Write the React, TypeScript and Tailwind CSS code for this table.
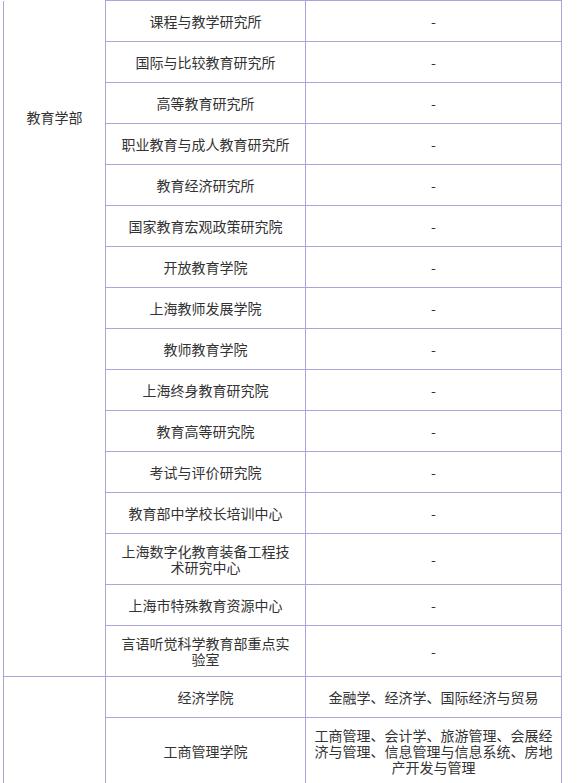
import React from 'react';

type Row = { name: string; majors?: string };

const eduRows: Row[] = [
  { name: '课程与教学研究所' },
  { name: '国际与比较教育研究所' },
  { name: '高等教育研究所' },
  { name: '职业教育与成人教育研究所' },
  { name: '教育经济研究所' },
  { name: '国家教育宏观政策研究院' },
  { name: '开放教育学院' },
  { name: '上海教师发展学院' },
  { name: '教师教育学院' },
  { name: '上海终身教育研究院' },
  { name: '教育高等研究院' },
  { name: '考试与评价研究院' },
  { name: '教育部中学校长培训中心' },
  { name: '上海数字化教育装备工程技术研究中心' },
  { name: '上海市特殊教育资源中心' },
  { name: '言语听觉科学教育部重点实验室' },
];

const econRows: Row[] = [
  { name: '经济学院', majors: '金融学、经济学、国际经济与贸易' },
  {
    name: '工商管理学院',
    majors: '工商管理、会计学、旅游管理、会展经济与管理、信息管理与信息系统、房地产开发与管理',
  },
];

const cell = 'border border-[#aca4d8] text-center align-middle py-[9px]';

export default function App() {
  return (
    <div
      className="bg-white text-[#333333] text-[14px] leading-[16px]"
      style={{ fontFamily: '"Noto Sans CJK SC", "Noto Sans", sans-serif' }}
    >
      <table className="ml-[3px] w-[558px] table-fixed border-collapse">
        <colgroup>
          <col className="w-[102px]" />
          <col className="w-[200px]" />
          <col className="w-[256px]" />
        </colgroup>
        <tbody>
          {eduRows.map((r, i) => (
            <tr key={r.name} className="h-[41px]">
              {i === 0 && (
                <td
                  rowSpan={eduRows.length}
                  className="border border-t-0 border-[#aca4d8] text-center align-top pt-[108px]"
                >
                  教育学部
                </td>
              )}
              <td className={`${cell} px-[12px]`}>{r.name}</td>
              <td className={`${cell} px-[6px]`}>-</td>
            </tr>
          ))}
          {econRows.map((r, i) => (
            <tr key={r.name} className="h-[41px]">
              {i === 0 && (
                <td rowSpan={econRows.length} className="border border-b-0 border-[#aca4d8]" />
              )}
              <td className={`${cell} px-[12px]`}>{r.name}</td>
              <td className={`${cell} px-[6px]`}>{r.majors}</td>
            </tr>
          ))}
        </tbody>
      </table>
    </div>
  );
}
